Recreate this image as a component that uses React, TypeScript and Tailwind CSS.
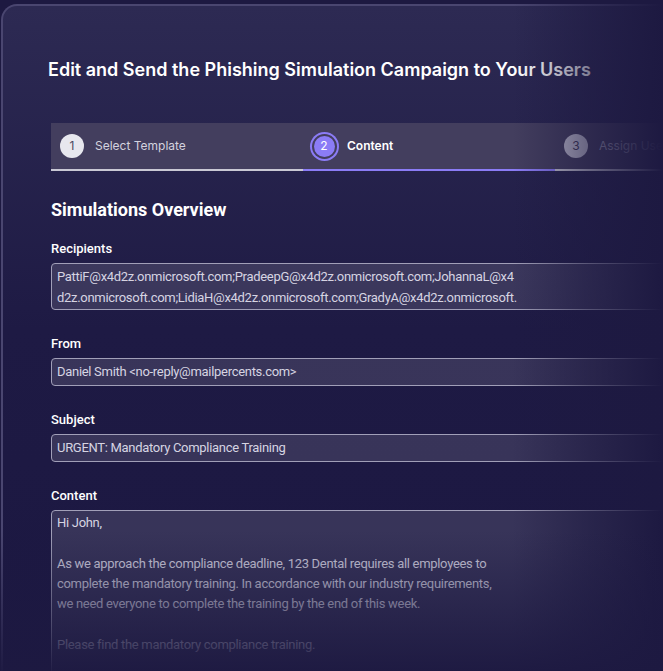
const recipients = [
  "PattiF@x4d2z.onmicrosoft.com;PradeepG@x4d2z.onmicrosoft.com;JohannaL@x4",
  "d2z.onmicrosoft.com;LidiaH@x4d2z.onmicrosoft.com;GradyA@x4d2z.onmicrosoft.",
];

const body = [
  "Hi John,",
  "",
  "As we approach the compliance deadline, 123 Dental requires all employees to",
  "complete the mandatory training. In accordance with our industry requirements,",
  "we need everyone to complete the training by the end of this week.",
  "",
  "Please find the mandatory compliance training.",
  "",
  "",
];

function Step({ n, label, state }: { n: number; label: string; state: "done" | "active" | "todo" }) {
  return (
    <div
      className={
        "flex items-center gap-[11px] w-[252px] shrink-0 pl-[9px] h-full border-b-2 " +
        (state === "active" ? "border-[#8b7cf6]" : "border-[#c9c8d4]")
      }
    >
      {state === "active" ? (
        <div className="w-[24px] h-[24px] flex items-center justify-center">
          <div className="w-[21px] h-[21px] rounded-full bg-[#8b7cf6] ring-2 ring-[#8b7cf6] ring-offset-2 ring-offset-[#433e5e] flex items-center justify-center text-[12px] text-white">
            {n}
          </div>
        </div>
      ) : (
        <div
          className={
            "w-[24px] h-[24px] rounded-full flex items-center justify-center text-[12px] " +
            (state === "done" ? "bg-[#e7e7ee] text-[#4a4860]" : "bg-[#c2c0d0] text-[#3f3b57]")
          }
        >
          {n}
        </div>
      )}
      <span
        className={
          state === "active"
            ? "text-[12px] font-semibold text-white"
            : state === "done"
            ? "text-[12px] text-[#d3d2de]"
            : "text-[12px] text-[#a8a6ba]"
        }
      >
        {label}
      </span>
    </div>
  );
}

function Field({ label, top, children }: { label: string; top: string; children: React.ReactNode }) {
  return (
    <div className={top}>
      <div className="text-[13px] leading-[20px] font-medium text-white">{label}</div>
      <div className="mt-[4px] rounded-[4px] border border-[#a19fb8] bg-white/[0.12] pl-[5px] text-[13px] tracking-[-0.3px] text-[#d6d4e2]">
        {children}
      </div>
    </div>
  );
}

export default function App() {
  return (
    <div
      className="relative w-[663px] h-[671px] overflow-hidden bg-[#1d1941]"
      style={{ fontFamily: "Inter, 'Noto Sans', sans-serif" }}
    >
      {/* card */}
      <div className="ml-[1px] mt-[4px] w-[720px] h-[720px] rounded-tl-[16px] border-l-2 border-t-2 border-[#4a4670] bg-gradient-to-b from-[#2d2a53] via-[#1e1a44] via-45% to-[#1b1741]">
        <div className="pt-[52px] pl-[45px]">
          <h1 className="text-[18px] leading-[24px] font-semibold text-white">
            Edit and Send the Phishing Simulation Campaign to Your Users
          </h1>
        </div>

        <div className="ml-[48px] mt-[41px] w-[640px]">
          <div className="flex h-[48px] bg-[#433e5e]">
            <Step n={1} label="Select Template" state="done" />
            <Step n={2} label="Content" state="active" />
            <Step n={3} label="Assign Users" state="todo" />
          </div>

          <div style={{ fontFamily: "Roboto, 'Noto Sans', sans-serif" }}>
            <h2 className="mt-[25px] text-[18px] leading-[28px] font-bold text-white">Simulations Overview</h2>

            <Field label="Recipients" top="mt-[15px]">
              <div className="pt-[2px] pb-[1px] leading-[21px]">
                {recipients.map((l) => (
                  <div key={l} className="whitespace-nowrap">{l}</div>
                ))}
              </div>
            </Field>

            <Field label="From" top="mt-[24px]">
              <div className="py-[3px] leading-[20px]">Daniel Smith &lt;no-reply@mailpercents.com&gt;</div>
            </Field>

            <Field label="Subject" top="mt-[24px]">
              <div className="py-[3px] leading-[20px]">URGENT: Mandatory Compliance Training</div>
            </Field>

            <Field label="Content" top="mt-[24px]">
              <div className="pt-[2px] pb-[10px] leading-[20.3px]">
                {body.map((l, i) => (
                  <div key={i} className="whitespace-nowrap h-[20.3px]">{l}</div>
                ))}
              </div>
            </Field>
          </div>
        </div>
      </div>

      {/* fades over the edges */}
      <div className="pointer-events-none absolute top-0 right-0 h-full w-[150px] bg-gradient-to-r from-transparent via-[#1d1941]/55 to-[#1d1941]" />
      <div className="pointer-events-none absolute bottom-0 left-0 w-full h-[140px] bg-gradient-to-b from-transparent to-[#1d1941]/95" />
    </div>
  );
}
